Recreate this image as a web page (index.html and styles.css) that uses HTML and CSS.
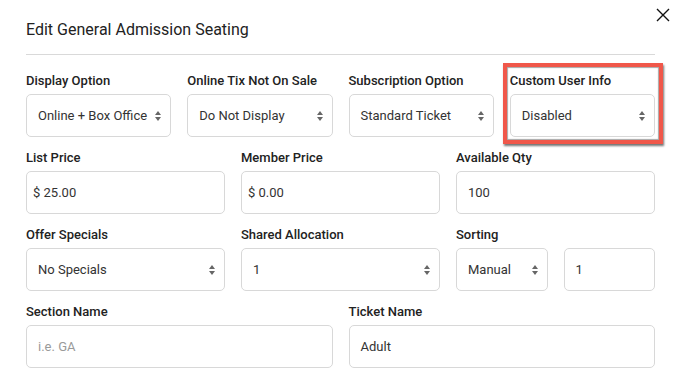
FILE: index.html
```html
<!DOCTYPE html>
<html>
<head>
<meta charset="utf-8">
<link rel="stylesheet" href="styles.css">
</head>
<body>
<div class="modal">
  <button class="close" aria-label="Close">
    <svg width="14" height="14" viewBox="0 0 14 14"><path d="M1 1L13 13M13 1L1 13" stroke="#111" stroke-width="1.4" fill="none"/></svg>
  </button>
  <div class="header"><h1 class="title">Edit General Admission Seating</h1></div>
  <div class="form">
    <div class="row cols-4">
      <div class="field">
        <div class="label">Display Option</div>
        <div class="box select"><span class="val">Online + Box Office</span><svg class="arrows" width="6" height="10" viewBox="0 0 6 10"><path d="M0 4L3 0L6 4Z M0 6L3 10L6 6Z" fill="#666"/></svg></div>
      </div>
      <div class="field">
        <div class="label">Online Tix Not On Sale</div>
        <div class="box select"><span class="val">Do Not Display</span><svg class="arrows" width="6" height="10" viewBox="0 0 6 10"><path d="M0 4L3 0L6 4Z M0 6L3 10L6 6Z" fill="#666"/></svg></div>
      </div>
      <div class="field">
        <div class="label">Subscription Option</div>
        <div class="box select"><span class="val">Standard Ticket</span><svg class="arrows" width="6" height="10" viewBox="0 0 6 10"><path d="M0 4L3 0L6 4Z M0 6L3 10L6 6Z" fill="#666"/></svg></div>
      </div>
      <div class="field highlighted">
        <div class="label">Custom User Info</div>
        <div class="box select"><span class="val">Disabled</span><svg class="arrows" width="6" height="10" viewBox="0 0 6 10"><path d="M0 4L3 0L6 4Z M0 6L3 10L6 6Z" fill="#666"/></svg></div>
        <div class="highlight"></div>
      </div>
    </div>
    <div class="row cols-3">
      <div class="field">
        <div class="label">List Price</div>
        <div class="box price"><span class="val">$ 25.00</span></div>
      </div>
      <div class="field">
        <div class="label">Member Price</div>
        <div class="box price"><span class="val">$ 0.00</span></div>
      </div>
      <div class="field">
        <div class="label">Available Qty</div>
        <div class="box"><span class="val">100</span></div>
      </div>
    </div>
    <div class="row cols-3">
      <div class="field">
        <div class="label">Offer Specials</div>
        <div class="box select"><span class="val">No Specials</span><svg class="arrows" width="6" height="10" viewBox="0 0 6 10"><path d="M0 4L3 0L6 4Z M0 6L3 10L6 6Z" fill="#666"/></svg></div>
      </div>
      <div class="field">
        <div class="label">Shared Allocation</div>
        <div class="box select"><span class="val">1</span><svg class="arrows" width="6" height="10" viewBox="0 0 6 10"><path d="M0 4L3 0L6 4Z M0 6L3 10L6 6Z" fill="#666"/></svg></div>
      </div>
      <div class="field">
        <div class="label">Sorting</div>
        <div class="pair">
          <div class="box select"><span class="val">Manual</span><svg class="arrows" width="6" height="10" viewBox="0 0 6 10"><path d="M0 4L3 0L6 4Z M0 6L3 10L6 6Z" fill="#666"/></svg></div>
          <div class="box"><span class="val">1</span></div>
        </div>
      </div>
    </div>
    <div class="row cols-2">
      <div class="field">
        <div class="label">Section Name</div>
        <div class="box"><span class="val placeholder">i.e. GA</span></div>
      </div>
      <div class="field">
        <div class="label">Ticket Name</div>
        <div class="box"><span class="val">Adult</span></div>
      </div>
    </div>
  </div>
</div>
</body>
</html>
```

FILE: styles.css
```css
* { box-sizing: border-box; }
html, body { margin: 0; padding: 0; background: #fff; }
body {
  font-family: Roboto, "Liberation Sans", Arial, sans-serif;
  color: #222;
  overflow: hidden;
}
.modal {
  position: relative;
  padding: 0 28px 0 26px;
}
.close {
  position: absolute;
  top: 7px;
  right: 12px;
  width: 16px;
  height: 16px;
  padding: 1px;
  border: 0;
  background: none;
  display: flex;
  align-items: center;
  justify-content: center;
}
.header {
  padding: 21px 0 15px;
  border-bottom: 1px solid #d9d9d9;
}
.title {
  margin: 0;
  font-size: 16px;
  line-height: 18px;
  font-weight: 400;
  color: #222;
}
.form {
  padding-top: 18px;
}
.row {
  display: grid;
  column-gap: 16px;
  margin-bottom: 13px;
}
.cols-4 { grid-template-columns: repeat(4, 1fr); }
.cols-3 { grid-template-columns: repeat(3, 1fr); }
.cols-2 { grid-template-columns: repeat(2, 1fr); }
.field { position: relative; min-width: 0; }
.label {
  font-size: 13px;
  line-height: 16px;
  font-weight: 500;
  color: #222;
  margin-bottom: 5px;
  white-space: nowrap;
}
.box {
  height: 43px;
  border: 1px solid #d8d8d8;
  border-radius: 5px;
  display: flex;
  align-items: center;
  padding: 0 11px;
  font-size: 13px;
  color: #333;
  background: #fff;
}
.box.price { padding-left: 6px; }
.select { justify-content: space-between; padding-right: 9px; }
.val { white-space: nowrap; }
.placeholder { color: #9a9a9a; }
.arrows { flex: none; }
.pair {
  display: grid;
  grid-template-columns: 1fr 1fr;
  column-gap: 16px;
}
.highlight {
  position: absolute;
  top: -10px;
  left: -7px;
  right: -8px;
  bottom: -7px;
  border: 4px solid #f0574a;
  box-shadow: 1px 2px 2px rgba(0,0,0,0.55), inset 0 0 1px 1px rgba(60,60,60,0.45);
  pointer-events: none;
}
```
